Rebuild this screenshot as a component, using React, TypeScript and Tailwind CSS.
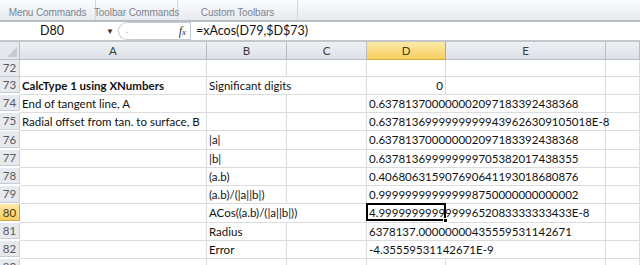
import React from "react";

const cellFont = "font-['Lato','Liberation_Sans',sans-serif] text-[11.5px] text-[#111]";

type Row = {
  n: number;
  a?: string;
  bold?: boolean;
  b?: string;
  bSpan?: boolean;
  d?: string;
  dRight?: boolean;
  selected?: boolean;
};

const rows: Row[] = [
  { n: 72 },
  { n: 73, a: "CalcType 1 using XNumbers", bold: true, b: "Significant digits", bSpan: true, d: "0", dRight: true },
  { n: 74, a: "End of tangent line, A", d: "0.637813700000002097183392438368" },
  { n: 75, a: "Radial offset from tan. to surface, B", d: "0.63781369999999999439626309105018E-8" },
  { n: 76, b: "|a|", d: "0.637813700000002097183392438368" },
  { n: 77, b: "|b|", d: "0.637813699999999705382017438355" },
  { n: 78, b: "(a.b)", d: "0.406806315907690641193018680876" },
  { n: 79, b: "(a.b)/(|a||b|)", d: "0.999999999999998750000000000002" },
  { n: 80, b: "ACos((a.b)/(|a||b|))", bSpan: true, d: "4.99999999999999652083333333433E-8", selected: true },
  { n: 81, b: "Radius", d: "6378137.00000000435559531142671" },
  { n: 82, b: "Error", d: "-4.35559531142671E-9" },
  { n: 83 },
];

const line = "border-b border-r border-[#dadcdd]";

function SheetRow({ r }: { r: Row }) {
  return (
    <>
      <div
        className={`h-[16.6px] flex items-center justify-center border-b border-r text-[11.5px] font-['Lato',sans-serif] ${
          r.selected
            ? "bg-gradient-to-b from-[#fde9a6] to-[#f7cf5e] border-[#c9a94a] text-[#4a3a10]"
            : "bg-[#e6e9ee] border-[#c9ced6] text-[#5a5a5a]"
        }`}
      >
        {r.n}
      </div>
      <div className={`${line} ${cellFont} px-[2px] flex items-center whitespace-nowrap ${r.bold ? "font-bold" : ""}`}>
        {r.a}
      </div>
      <div
        className={`${line} ${cellFont} px-[2px] flex items-center whitespace-nowrap ${r.bSpan ? "col-span-2" : ""}`}
      >
        {r.b}
      </div>
      {!r.bSpan && <div className={line} />}
      <div
        className={`${line} ${cellFont} relative px-[2px] flex items-center whitespace-nowrap ${
          r.d && !r.dRight ? "col-span-2" : ""
        } ${r.dRight ? "justify-end" : ""}`}
      >
        {r.d}
        {r.selected && (
          <div className="absolute left-[-1px] top-[-1px] w-[80px] h-[18px] border-2 border-black">
            <div className="absolute right-[-4px] bottom-[-4px] w-[5px] h-[5px] bg-black border border-white" />
          </div>
        )}
      </div>
      {(!r.d || r.dRight) && <div className={line} />}
      <div className={line} />
    </>
  );
}

export default function App() {
  const cols = "grid grid-cols-[20px_187px_80px_80px_79px_160px_1fr]";
  return (
    <div className="w-[640px] h-[265px] overflow-hidden bg-white">
      {/* ribbon group labels */}
      <div className="h-[22px] flex bg-gradient-to-b from-[#fbfcfd] to-[#e7eaef] border-b-2 border-[#b9bec6] text-[10px] tracking-[-0.1px] text-[#7a8591] font-['Liberation_Sans',sans-serif] whitespace-nowrap">
        <div className="w-[96px] flex items-center justify-center border-r border-[#d3d7dd] pt-[5px]">Menu Commands</div>
        <div className="w-[82px] flex items-center justify-center border-r border-[#d3d7dd] pt-[5px]">Toolbar Commands</div>
        <div className="w-[120px] flex items-center justify-center border-r border-[#d3d7dd] pt-[5px]">Custom Toolbars</div>
        <div className="flex-1" />
      </div>

      {/* formula bar */}
      <div className="h-[20px] flex items-center border-b-2 border-[#c2c7ce] bg-white font-['Lato',sans-serif]">
        <div className="w-[104px] text-center text-[12.5px] text-[#111]">D80</div>
        <div className="w-[12px] text-[8px] text-[#333] text-center">▼</div>
        <div className="ml-[2px] h-[18px] w-[72px] flex items-center rounded-l-full border border-[#c8ccd2] border-r-0">
          <span className="ml-[6px] text-[#c8ccd2] text-[10px]">-</span>
          <span className="ml-auto mr-[4px] font-['Liberation_Serif',serif] italic text-[12px] text-[#333]">
            f<span className="text-[9px]">x</span>
          </span>
        </div>
        <div className="h-[18px] border-l border-[#c8ccd2]" />
        <div className="ml-[5px] text-[12.5px] text-[#111]">=xAcos(D79,$D$73)</div>
      </div>

      {/* column headers */}
      <div className={`${cols} h-[18px] font-['Lato',sans-serif] text-[11.5px] text-[#3c3c3c]`}>
        <div className="relative bg-[#e4e7ec] border-r border-b border-[#b9bec6]">
          <div className="absolute right-[2px] bottom-[2px] w-0 h-0 border-l-[10px] border-l-transparent border-b-[10px] border-b-[#c5c9cf]" />
        </div>
        {["A", "B", "C", "D", "E", ""].map((c) => (
          <div
            key={c || "F"}
            className={`flex items-center justify-center border-r border-b ${
              c === "D"
                ? "bg-gradient-to-b from-[#fde9a6] to-[#f7cf5e] border-[#c9a94a] text-[#4a3a10]"
                : "bg-gradient-to-b from-[#eef0f3] to-[#dde1e7] border-[#b9bec6]"
            }`}
          >
            {c}
          </div>
        ))}
      </div>

      {/* cells */}
      <div className={cols}>
        {rows.map((r) => (
          <SheetRow key={r.n} r={r} />
        ))}
        {/* partly visible next row */}
        <div className="h-[16.6px] bg-[#e6e9ee] border-r border-[#c9ced6]" />
        <div className={line} />
        <div className={line} />
        <div className={line} />
        <div className={line} />
        <div className={line} />
        <div className={line} />
      </div>
    </div>
  );
}
